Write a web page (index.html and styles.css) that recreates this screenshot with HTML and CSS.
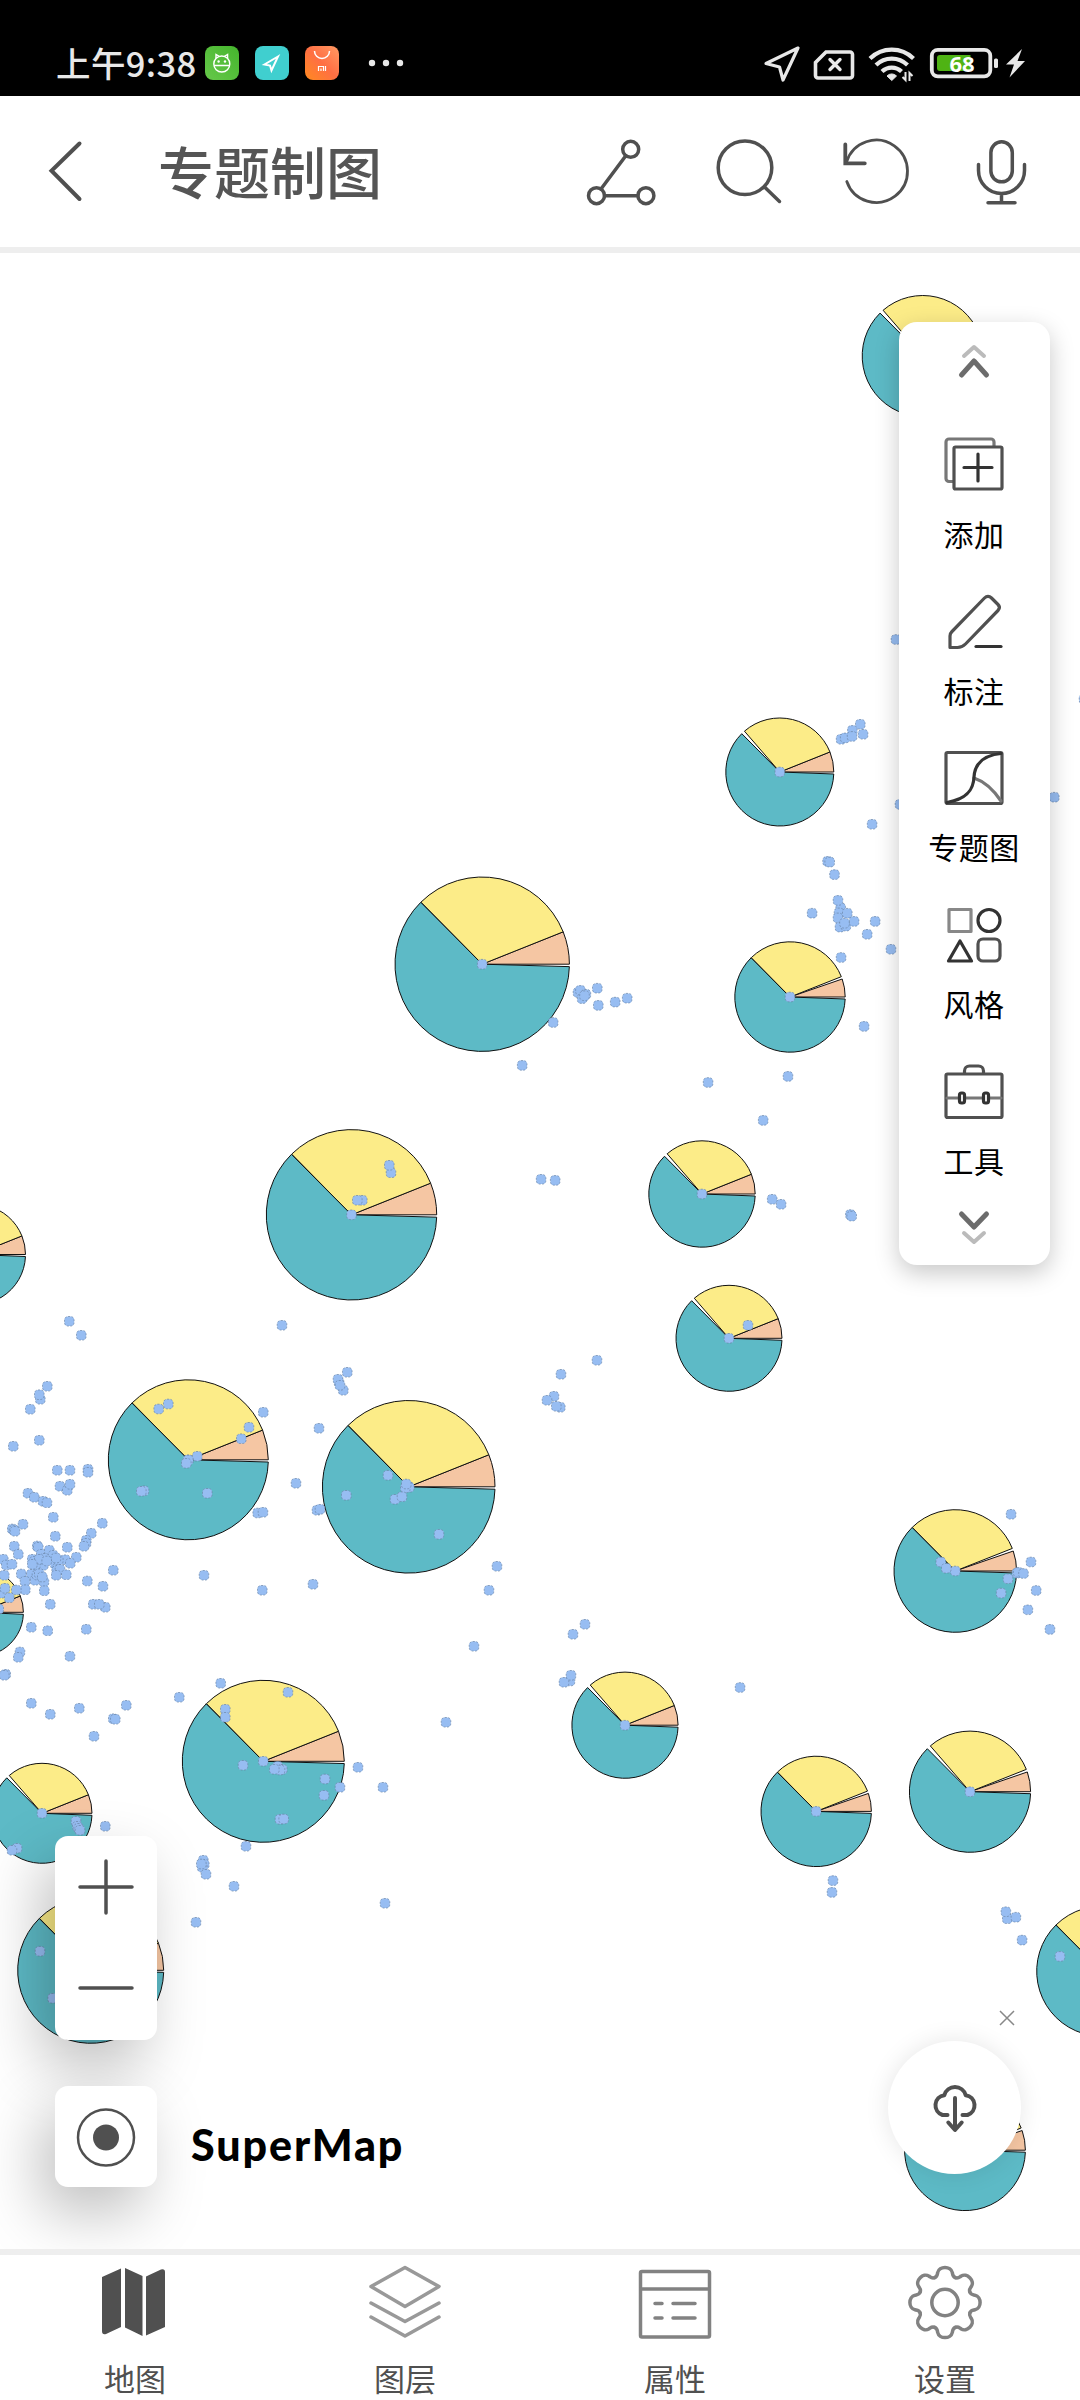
FILE: index.html
```html
<!DOCTYPE html>
<html lang="zh-CN">
<head>
<meta charset="utf-8">
<title>专题制图</title>
<link rel="stylesheet" href="styles.css">
</head>
<body>
<div class="screen">
  <div class="status">
    <span class="time">上午9:38</span>
    <svg class="apps" viewBox="205 40 200 46">
      <defs>
        <linearGradient id="g1" x1="1" y1="0" x2="0" y2="1"><stop offset="0" stop-color="#45b52d"/><stop offset="1" stop-color="#66c84a"/></linearGradient>
        <linearGradient id="g2" x1="1" y1="0" x2="0" y2="1"><stop offset="0" stop-color="#ff9a64"/><stop offset=".5" stop-color="#ff6f43"/><stop offset="1" stop-color="#ff8a1f"/></linearGradient>
      </defs>
      <rect x="205" y="46" width="34" height="34" rx="8" fill="url(#g1)"/>
      <g fill="none" stroke="#fff" stroke-width="1.4">
        <circle cx="221.800" cy="64" r="8"/>
        <path d="M214 65.500h15.600M216 58.500v-4l3.500 2M227.600 58.500v-4l-3.500 2"/>
      </g>
      <circle cx="218.600" cy="61.500" r="1.200" fill="#fff"/><circle cx="225" cy="61.500" r="1.200" fill="#fff"/>
      <rect x="255" y="46" width="34" height="34" rx="8" fill="#40cfcf"/>
      <path d="M278 56.500L264.500 64.500L270 65.500L271.500 70.500Z" fill="none" stroke="#fff" stroke-width="2"/>
      <rect x="305" y="46" width="34" height="34" rx="8" fill="url(#g2)"/>
      <path d="M314.500 51a7.500 7.500 0 0 0 15 0" fill="none" stroke="#fff" stroke-width="1.500"/>
      <path d="M318.500 71v-4.500h5v4.500M321 68.500v2.500M325.500 66v5" fill="none" stroke="#fff" stroke-width="1.200"/>
      <g fill="#e8e8e8"><circle cx="372" cy="63" r="3.200"/><circle cx="386" cy="63" r="3.200"/><circle cx="400" cy="63" r="3.200"/></g>
    </svg>
    <svg class="signals" viewBox="760 40 270 46">
      <path d="M798 48L766 63.500L779.500 67L783 80Z" fill="none" stroke="#e8e8e8" stroke-width="3.200" stroke-linejoin="round"/>
      <path d="M826 52h24a2.500 2.500 0 0 1 2.500 2.500v21a2.500 2.500 0 0 1 -2.500 2.500h-32a2.500 2.500 0 0 1 -2.500 -2.500v-13z" fill="none" stroke="#e8e8e8" stroke-width="3.600"/>
      <path d="M830 59.500l10 10M840 59.500l-10 10" stroke="#e8e8e8" stroke-width="3.400" stroke-linecap="round"/>
      <g fill="none" stroke="#e8e8e8" stroke-width="4.200">
        <path d="M870 58.500a31 31 0 0 1 43.500 0"/><path d="M876 65a22.500 22.500 0 0 1 31.500 0"/><path d="M882 71.500a14 14 0 0 1 19.500 0"/>
      </g>
      <path d="M887 76a6.500 6.500 0 0 1 9.500 0l-4.700 4.500z" fill="#e8e8e8" stroke="#e8e8e8"/>
      <path d="M905.500 72v8l-3-3M909.500 81v-8l3 3" fill="none" stroke="#e8e8e8" stroke-width="2"/>
      <rect x="931.800" y="49.800" width="58.500" height="26.500" rx="6" fill="none" stroke="#e8e8e8" stroke-width="3.800"/>
      <path d="M940 55h30.500v16h-30.500a3 3 0 0 1 -3 -3v-10a3 3 0 0 1 3 -3z" fill="#4fb314"/>
      <rect x="994" y="58.500" width="4" height="9.500" rx="1.500" fill="#e8e8e8"/>
      <text class="charge" x="962" y="71.500">68</text>
      <path d="M1022 49L1006 64.500h8l-4.500 13L1025 61h-7.500z" fill="#e8e8e8"/>
    </svg>
  </div>

  <header class="header">
    <svg class="back" viewBox="0 96 158 151"><path d="M79.500 143.500L51.500 170.700L79.500 199"/></svg>
    <h1 class="title">专题制图</h1>
    <div class="tools">
      <svg viewBox="559.500 96 126 151"><circle cx="630.200" cy="149.300" r="8"/><circle cx="596" cy="195.700" r="8"/><circle cx="645.400" cy="195.700" r="8"/><path d="M625.300 155.700L600.500 189M604 195.700h33.400"/></svg>
      <svg viewBox="685.500 96 126 151"><circle cx="744.500" cy="167.700" r="26.800"/><path d="M764 187L779 201.500"/></svg>
      <svg class="thin" viewBox="811.500 96 126 151"><path d="M846.300 181.500A31.200 31.200 0 1 0 846 162"/><path class="tip" d="M844.800 144.500v18.800h19.500"/></svg>
      <svg viewBox="937.500 96 126 151"><rect x="990.400" y="141.800" width="21.400" height="40" rx="10.700"/><path d="M978 164.500v6a23 23 0 0 0 46 0v-6M1001 194v8.500M987.500 202.700h27"/></svg>
    </div>
  </header>

  <main class="map">
    <svg class="canvas" id="map" viewBox="0 253 1080 1996"></svg>

    <div class="panel">
      <svg class="more" viewBox="-20 0 40 36"><path class="faint" d="M-10 13L0 4L10 13"/><path d="M-12.500 32L0 18L12.500 32"/></svg>
      <div class="entry"><svg viewBox="0 0 60 60"><path d="M9 46.500H5a3 3 0 0 1 -3 -3V7a3 3 0 0 1 3 -3h42a3 3 0 0 1 3 3v4" stroke="#777"/><rect x="10" y="12" width="48" height="42" rx="1.500"/><path d="M34 19v27M20 32.500h28" stroke="#333"/></svg><span>添加</span></div>
      <div class="entry"><svg viewBox="0 0 60 60"><path d="M6 55.500V44q0 -2.500 2 -4.500L40.500 6q3.500 -3.500 7 0l6.500 6.500q3 3 0 6L21.500 52q-3.500 3.500 -8 3.500z"/><path d="M32 54.500h25" stroke="#333"/></svg><span>标注</span></div>
      <div class="entry"><svg viewBox="0 0 60 60"><rect x="2" y="4.500" width="56" height="51" rx="1.500"/><path d="M30 30Q45 35 57 53" stroke="#777"/><path d="M3 54.500C24 51 29.500 41 30 29C31 14 42 7 57 5.500" stroke="#333"/></svg><span>专题图</span></div>
      <div class="entry"><svg viewBox="0 0 60 60"><rect x="5" y="4.500" width="22" height="22" stroke="#888"/><circle cx="45" cy="15.500" r="11" stroke="#333"/><path d="M16 36L27.500 56H4.500z" stroke="#333"/><rect x="34" y="34" width="22" height="22" rx="5"/></svg><span>风格</span></div>
      <div class="entry"><svg viewBox="0 0 60 60"><rect x="2" y="12" width="56" height="43.500" rx="1.500"/><path d="M20.500 11.500V9a5 5 0 0 1 5 -5h9a5 5 0 0 1 5 5v2.500"/><path d="M3 36h54" stroke="#777"/><g stroke="#333" fill="#fff"><rect x="15.500" y="31" width="5" height="10" rx="2"/><rect x="39.500" y="31" width="5" height="10" rx="2"/></g></svg><span>工具</span></div>
      <svg class="more more-down" viewBox="-20 0 40 36"><path d="M-12.500 4L0 17L12.500 4"/><path class="faint" d="M-10 23L0 32L10 23"/></svg>
    </div>

    <div class="controls">
      <div class="zoom">
        <svg viewBox="0 0 102 102"><path d="M25 51h52M51 25v52"/></svg>
        <svg viewBox="0 0 102 102"><path d="M25 50h52"/></svg>
      </div>
      <div class="locate"><svg viewBox="0 0 102 101"><circle class="ring" cx="51" cy="51.500" r="28"/><circle class="core" cx="51" cy="51.500" r="13"/></svg></div>
    </div>
    <div class="brand">SuperMap</div>
    <svg class="close" viewBox="0 0 16 16"><path d="M1 1L15 15M15 1L1 15"/></svg>
    <div class="download"><svg viewBox="0 0 56 56"><path d="M20.500 35H15.500A10.200 10.200 0 0 1 17.300 15.200A11.100 11.100 0 0 1 38.700 15.200A10.200 10.200 0 0 1 40.500 35H35.500M28 18v31.500M21.300 42.500L28 50L34.700 42.500"/></svg></div>
  </main>

  <nav class="nav">
    <div class="tab active"><svg viewBox="1 0 80 80"><path class="solid" d="M8 17L27 8.500V67L12 74Q8 75 8 71zM31 8L48.500 16V76L31 67.500zM52 16.500L67 9.500Q71 8.500 71 12V67L52 75.500z"/></svg><span>地图</span></div>
    <div class="tab"><svg class="light" viewBox="0 0 80 80"><path d="M40 7.500L74 26.500L40 46.500L6 26.500zM6 43L40 61.500L74 43M6 57L40 76L74 57"/></svg><span>图层</span></div>
    <div class="tab"><svg viewBox="0 0 80 80"><rect x="5.500" y="11.500" width="69" height="65.500" rx="1.500"/><path d="M6 29h68M20 43.500h7M38 43.500h22M20 58h7M38 58h22"/></svg><span>属性</span></div>
    <div class="tab"><svg viewBox="-40 -42.500 80 80">
      <defs><path id="tooth" d="M-10.300 -24.900C-7.400 -26.100 -7.800 -28 -7.300 -30C-6 -36.800 6 -36.800 7.300 -30C7.800 -28 7.400 -26.100 10.300 -24.900"/></defs>
      <use href="#tooth"/><use href="#tooth" transform="rotate(45)"/><use href="#tooth" transform="rotate(90)"/><use href="#tooth" transform="rotate(135)"/><use href="#tooth" transform="rotate(180)"/><use href="#tooth" transform="rotate(225)"/><use href="#tooth" transform="rotate(270)"/><use href="#tooth" transform="rotate(315)"/>
      <circle r="13.200"/></svg><span>设置</span></div>
  </nav>
</div>
<script src="map.js"></script>
</body>
</html>
```
FILE: styles.css
```css
* { box-sizing: border-box; }
body { margin: 0; background: #fff; font-family: "Noto Sans CJK SC", sans-serif; }
.screen { width: 1080px; height: 2400px; display: flex; flex-direction: column; overflow: hidden; }
svg { display: block; flex: none; }

.status { height: 96px; background: #000; color: #e8e8e8; display: flex; align-items: flex-start; padding: 39px 50px 0 56px; }
.time { width: 149px; font-size: 34.500px; font-weight: 500; line-height: 46px; letter-spacing: .4px; white-space: nowrap; }
.apps { width: 200px; height: 46px; margin-top: 1px; }
.signals { width: 270px; height: 46px; margin: 1px 0 0 auto; }
.charge { font-family: "Noto Sans", sans-serif; font-weight: 700; font-size: 22px; fill: #fff; text-anchor: middle; }

.header { height: 157px; border-bottom: 6px solid #eee; display: flex; align-items: center; }
.header svg { height: 151px; fill: none; stroke: #505050; stroke-width: 3.500; stroke-linecap: round; }
.header .back { width: 158px; stroke-width: 4; }
.title { margin: 0 0 4px; color: #555; font-size: 56px; font-weight: 500; line-height: 80px; }
.tools { margin-left: auto; padding-right: 16.500px; display: flex; }
.tools svg { width: 126px; }
.tools .thin { stroke-width: 2.800; }
.tools .tip { stroke-width: 3.800; }

.map { position: relative; height: 1996px; overflow: hidden; background: #fff; }
.canvas { width: 1080px; height: 1996px; }
.slice { stroke: #111; stroke-width: 1; stroke-linejoin: round; }
.a { fill: #5dbac6; }
.b { fill: #fcec88; }
.c { fill: #f5c6a3; }
.dot { fill: #97bdf2; stroke: #6a84a4; stroke-width: .8; stroke-dasharray: 2 1.500; stroke-opacity: .85; }

.panel { position: absolute; left: 899px; top: 69px; width: 151px; height: 943px; padding: 21px 1px 0 0; border-radius: 18px; background: #fff; box-shadow: 0 8px 24px rgba(0,0,0,.22); display: flex; flex-direction: column; align-items: center; }
.more { width: 40px; height: 36px; margin-bottom: 56px; fill: none; stroke: #6c6c6c; stroke-width: 5; stroke-linecap: round; stroke-linejoin: round; }
.more .faint { stroke: #bbb; stroke-width: 4; }
.more-down { margin: -8px 0 0; }
.entry { height: 156.700px; display: flex; flex-direction: column; align-items: center; }
.entry svg { width: 60px; height: 60px; margin-bottom: 16px; fill: none; stroke: #505050; stroke-width: 3.200; stroke-linecap: round; stroke-linejoin: round; }
.entry span { font-size: 30px; line-height: 44px; letter-spacing: .5px; color: #000; font-weight: 400; }

.controls { position: absolute; left: 55px; top: 1583px; display: grid; gap: 46px; }
.zoom, .locate { width: 102px; border-radius: 13px; background: #fff; box-shadow: -14px 26px 60px rgba(0,0,0,.25); }
.controls svg { width: 102px; fill: none; stroke: #505050; stroke-width: 3.500; stroke-linecap: round; }
.controls .ring { stroke-width: 2.500; }
.controls .core { fill: #505050; stroke: none; }
.brand { position: absolute; left: 191px; top: 1866px; font-family: Lato, sans-serif; font-size: 43px; font-weight: 900; line-height: 52px; letter-spacing: 1.900px; color: #000; }
.close { position: absolute; left: 999px; top: 1757px; width: 16px; height: 16px; stroke: #888; stroke-width: 1.500; }
.download { position: absolute; left: 888px; top: 1788px; width: 133px; height: 133px; border-radius: 50%; background: #fff; box-shadow: 0 0 24px rgba(0,0,0,.1); display: grid; place-items: center; }
.download svg { width: 56px; height: 56px; fill: none; stroke: #505050; stroke-width: 4; stroke-linecap: round; stroke-linejoin: round; }

.nav { height: 151px; border-top: 6px solid #eee; background: #fff; display: grid; grid-template-columns: repeat(4, 1fr); }
.tab { display: flex; flex-direction: column; align-items: center; padding-top: 5px; }
.tab svg { width: 80px; height: 80px; fill: none; stroke: #828282; stroke-width: 3.500; stroke-linecap: round; stroke-linejoin: round; }
.tab svg.light { stroke: #999; }
.tab .solid { fill: #505050; stroke: none; }
.tab span { margin-top: 16px; font-size: 31px; line-height: 44px; color: #505050; }
```
FILE: map.js
```javascript
const NS = "http://www.w3.org/2000/svg";
const map = document.getElementById("map");

function add(name, cls, attrs) {
  const el = document.createElementNS(NS, name);
  el.setAttribute("class", cls);
  for (const k in attrs) el.setAttribute(k, attrs[k]);
  map.appendChild(el);
}

// Sector from angle a to angle b in degrees, counter-clockwise from east.
function slice(cls, cx, cy, r, a, b) {
  const p = t => {
    const q = t * Math.PI / 180;
    return (cx + r * Math.cos(q)).toFixed(2) + " " + (cy - r * Math.sin(q)).toFixed(2);
  };
  add("path", "slice " + cls, { d: `M${cx} ${cy}L${p(a)}A${r} ${r} 0 ${b - a > 180 ? 1 : 0} 0 ${p(b)}Z` });
}

// x, y, radius, gap before teal, gap before yellow
const pies = [
  [922.7, 356, 60.5, 1, 0], [779.8, 772, 54, 1, 0], [482.2, 964.2, 87.2, 0, 0],
  [790, 997, 55.2, 0, 1], [702, 1194, 53.2, 1, 0], [351.5, 1214.8, 85.2, 0, 0],
  [-24.500, 1254.5, 50, 1, 0], [188.3, 1459.8, 80, 0, 0], [408.7, 1486.8, 86.300, 0, 0],
  [-20.600, 1612.3, 44, 0, 0], [42, 1813.3, 50, 1, 0], [263.3, 1761.3, 81, 0, 0],
  [90.7, 1970.3, 73, 0, 0], [955.3, 1571, 61.300, 0, 1], [625, 1725.2, 53.1, 1, 0],
  [816.2, 1811.4, 55.2, 0, 1], [970, 1791.7, 60.6, 1, 1], [1101.700, 1971.2, 65, 0, 0],
  [965, 2150.2, 60.4, 0, 1], [729, 1338.3, 53, 1, 0]
];

// Tiles: origin, units per pixel, then local x,y pairs.
const tiles = [
  [840, 270, 3, 2.904, "168,1073 643,1531 180,1552 732,1246"],
  [360, 680, 2.904, 2.8, "1453,124 1430,141 1397,166 1409,162 1429,158 1461,152 1487,404 1358,508 1364,510 1378,545 1396,638 1391,652 1388,666 1388,617 1313,653 1415,653 1394,692 1411,689 1435,676 1407,681 1496,676 1473,712 1542,754 1397,777 1464,970 1243,1110 1011,1127 1171,1233 1197,1454 1223,1468 1424,1497 1428,1501 633,875 640,869 656,880 645,892 652,884 689,863 692,911 741,902 776,891 561,959 471,1079 526,1398 567,1401"],
  [0, 1100, 3, 3, "1173,218 1168,196 1087,301 1072,301 208,664 244,706 846,676 1042,817 1017,847 1014,838 1030,871 1020,856 142,859 121,898 118,884 91,928 118,1021 40,1039 957,985 476,927 505,912 790,937 747,982 724,1016 592,1069 565,1080 559,1090 432,1172 424,1174 622,1180 888,1150 773,1239 789,1237 951,1231 960,1228 1164,1126 1039,1186 1228,1162 1216,1164 1219,1152 1185,1198 1206,1190 1317,1303 172,1111 210,1111 264,1108 264,1117 180,1159 202,1171 210,1153 84,1180 103,1192 129,1204 141,1208 160,1252"],
  [0, 1500, 3, 3, "307,70 274,100 69,73 37,87 42,90 45,94 166,109 43,139 55,163 202,142 259,121 258,130 252,139 229,172 196,179 211,190 112,138 115,142 124,163 148,151 160,166 97,178 103,184 133,175 130,196 166,193 172,205 175,180 168,174 106,196 118,178 140,183 97,193 170,212 180,208 169,226 199,224 94,223 105,241 111,225 118,221 132,245 127,231 133,272 10,178 19,195 36,193 13,226 64,222 75,244 76,269 49,270 3,280 15,265 28,293 -4,327 262,243 309,259 340,211 151,313 280,313 316,322 298,313 94,382 143,392 259,388 60,456 55,472 210,469 17,523 13,526 94,610 151,643 238,625 379,616 340,656 346,658 282,709 538,592 612,226 787,271 662,550 316,979 228,964 232,979 236,985 240,991 51,1045 36,1051"],
  [0, 1780, 3, 2.529, "120,433 158,552"],
  [140, 1540, 3, 3, "519,133 1071,79 1047,151 1335,253 1299,283 1002,319 1290,423 1272,427 1293,406 444,457 256,508 256,532 309,676 413,679 427,688 420,690 403,688 555,717 552,766 600,742 654,682 729,742 420,838 431,837 318,919 190,961 193,973 187,982 184,972 198,1003 282,1039 168,1147 735,1090 918,547"],
  [540, 1400, 2.904, 2.703, "1368,309 1426,438 1441,515 1417,567 1481,620 1385,468 1389,466 1404,469 1359,483 1339,522 1164,438 1180,455 581,777 851,1299 848,1331 1357,1402 1353,1383 1382,1398 1400,1460 1510,1504"],
  [500, 1240, 3, 3, "744,256 291,361 183,403 162,469 141,481 181,502 169,499"]
];

function dot(x, y) {
  add("rect", "dot", { x: (x - 4.8).toFixed(1), y: (y - 4.8).toFixed(1), width: 9.6, height: 9.6, rx: 3.6 });
}

for (const [x, y, r, tealGap, yellowGap] of pies) {
  const yellowEnd = tealGap ? 130.9 : 134.6;
  slice("c", x, y, r, 0, yellowGap ? 19 : 21.8);
  slice("b", x, y, r, yellowGap ? 21.6 : 21.8, yellowEnd);
  slice("a", x, y, r, 134.8, 360 - Math.max(1.6, 115 / r));
}
for (const [x, y] of pies) if (x > 0) dot(x, y);
for (const [ox, oy, sx, sy, list] of tiles)
  for (const pair of list.split(" ")) {
    const [u, v] = pair.split(",").map(Number);
    dot(ox + u / sx, oy + v / sy);
  }
```
